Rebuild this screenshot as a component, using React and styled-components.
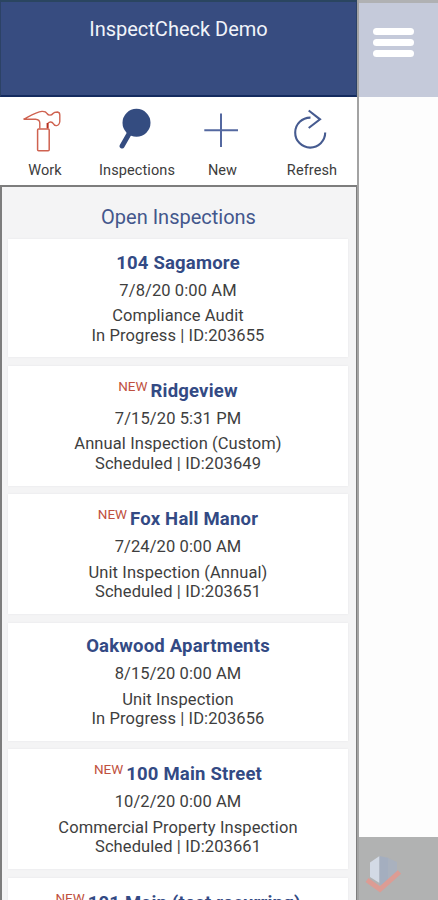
import React from "react";
import styled, { createGlobalStyle } from "styled-components";

const inspections = [
  {
    id: "203655",
    name: "104 Sagamore",
    date: "7/8/20 0:00 AM",
    type: "Compliance Audit",
    status: "In Progress",
  },
  {
    id: "203649",
    name: "Ridgeview",
    date: "7/15/20 5:31 PM",
    type: "Annual Inspection (Custom)",
    status: "Scheduled",
    isNew: true,
  },
  {
    id: "203651",
    name: "Fox Hall Manor",
    date: "7/24/20 0:00 AM",
    type: "Unit Inspection (Annual)",
    status: "Scheduled",
    isNew: true,
  },
  {
    id: "203656",
    name: "Oakwood Apartments",
    date: "8/15/20 0:00 AM",
    type: "Unit Inspection",
    status: "In Progress",
  },
  {
    id: "203661",
    name: "100 Main Street",
    date: "10/2/20 0:00 AM",
    type: "Commercial Property Inspection",
    status: "Scheduled",
    isNew: true,
  },
  {
    name: "101 Main (test recurring)",
    isNew: true,
  },
];

const HammerIcon = () => (
  <svg width="48" height="48" viewBox="0 0 48 48" fill="none">
    <path
      d="M2.5 14.2C8 11.5 15 7.2 21 6.4C24 6.3 25 6.6 26 8.5C27.5 10.8 30.5 10.6 32 8.5C33 7.2 34.5 7 36.5 7C38 7.2 38.8 8 38.8 10V16.5C38.5 19 37.5 20.3 35.5 20.6C33.8 20.8 33.2 20 32.5 18.8C31 16.4 28.5 16.4 26.8 18.4V23.5M2.5 14.2H14.5C17.8 14.4 18.8 15.5 18.8 18V23.5"
      stroke="#cf6250"
      strokeWidth="1.4"
    />
    <path d="M26.5 18V23.5" stroke="#b52d1c" strokeWidth="1.8" />
    <rect
      x="16.6"
      y="23.9"
      width="11.6"
      height="21.8"
      rx="1"
      stroke="#cf6250"
      strokeWidth="1.5"
    />
  </svg>
);

const SearchIcon = () => (
  <svg width="44" height="48" viewBox="0 0 44 48" fill="none">
    <circle cx="21.5" cy="17.8" r="14" fill="#344c80" />
    <path
      d="M14.5 28L7.1 41"
      stroke="#344c80"
      strokeWidth="5"
      strokeLinecap="round"
    />
  </svg>
);

const PlusIcon = () => (
  <svg width="44" height="48" viewBox="0 0 44 48" fill="none">
    <path d="M20 8.5V42M3.3 25.2H37" stroke="#5468a0" strokeWidth="2" />
  </svg>
);

const RefreshIcon = () => (
  <svg width="44" height="48" viewBox="0 0 44 48" fill="none">
    <path
      d="M20.5 12.6A15 15 0 1 0 35.2 27.6M18.7 5.5L30 14.3L18.7 23"
      stroke="#465b90"
      strokeWidth="2.1"
    />
  </svg>
);

const Logo = () => (
  <svg width="40" height="42" viewBox="0 0 40 42">
    <path d="M7 10.5L16.5 4V31L7 25Z" fill="#d3dae5" />
    <path d="M16.5 4L26 6V32L16.5 33Z" fill="#a4aebf" />
    <path d="M25 6L34 10V22L25 31Z" fill="#a9b1be" />
    <path
      d="M4 28L17 37.3L36.5 20"
      fill="none"
      stroke="#dc9c94"
      strokeWidth="5"
    />
  </svg>
);

const actions = [
  { label: "Work", icon: HammerIcon, width: 90 },
  { label: "Inspections", icon: SearchIcon, width: 94 },
  { label: "New", icon: PlusIcon, width: 77 },
  { label: "Refresh", icon: RefreshIcon, width: 102 },
];

const App = () => {
  return (
    <Screen>
      <GlobalStyle />
      <Drawer>
        <Header>InspectCheck Demo</Header>
        <Toolbar>
          {actions.map(({ label, icon: Icon, width }) => (
            <Action key={label} $width={width}>
              <Icon />
              <ActionLabel>{label}</ActionLabel>
            </Action>
          ))}
        </Toolbar>
        <ListPanel>
          <ListTitle>Open Inspections</ListTitle>
          <List>
            {inspections.map((item) => (
              <Card key={item.name} $isNew={item.isNew}>
                <CardTitle>
                  {item.isNew && <NewTag>NEW</NewTag>}
                  <Name>{item.name}</Name>
                </CardTitle>
                {item.date && <DateLine>{item.date}</DateLine>}
                {item.type && <InfoLine>{item.type}</InfoLine>}
                {item.id && (
                  <InfoLine>
                    {item.status} | ID:{item.id}
                  </InfoLine>
                )}
              </Card>
            ))}
          </List>
        </ListPanel>
      </Drawer>
      <Page>
        <PageHeader>
          <MenuButton aria-label="Menu">
            <MenuBar />
            <MenuBar />
            <MenuBar />
          </MenuButton>
        </PageHeader>
        <PageFooter>
          <Logo />
        </PageFooter>
      </Page>
    </Screen>
  );
};

export default App;

const GlobalStyle = createGlobalStyle`
  * {
    box-sizing: border-box;
  }
  body {
    margin: 0;
    overflow: hidden;
    font-family: Roboto, "Liberation Sans", sans-serif;
  }
`;

const Screen = styled.div`
  display: flex;
  width: 438px;
  height: 900px;
  overflow: hidden;
  background-color: #fdfdfd;
`;

const Drawer = styled.div`
  display: flex;
  flex-direction: column;
  width: 359px;
  height: 900px;
  flex-shrink: 0;
  border-right: 2px solid #a3a3a3;
  background-color: #ffffff;
`;

const Header = styled.div`
  height: 97px;
  flex-shrink: 0;
  padding-top: 15px;
  border: 1px solid #2c4266;
  border-top: 2px solid #2a4560;
  border-bottom: 2px solid #142b5f;
  background-color: #374c80;
  color: #f1f4fa;
  font-size: 20px;
  line-height: 24px;
  text-align: center;
`;

const Toolbar = styled.div`
  display: flex;
  height: 88px;
  flex-shrink: 0;
  padding-top: 8px;
`;

const Action = styled.div`
  display: flex;
  flex-direction: column;
  align-items: center;
  flex-shrink: 0;
  width: ${(props) => props.$width}px;
`;

const ActionLabel = styled.div`
  margin-top: 9px;
  color: #3c3c3c;
  font-size: 14.5px;
  line-height: 17px;
  letter-spacing: 0.1px;
`;

const ListPanel = styled.div`
  flex: 1;
  min-height: 0;
  overflow: hidden;
  padding: 0 8px 0 6px;
  border: 2px solid #7d7d7d;
  border-right-width: 1px;
  border-bottom: none;
  background-color: #f4f4f5;
`;

const ListTitle = styled.div`
  height: 52px;
  padding-top: 18px;
  padding-left: 1px;
  color: #43578c;
  font-size: 20px;
  line-height: 24px;
  text-align: center;
`;

const List = styled.div`
  display: flex;
  flex-direction: column;
  gap: 8.5px;
`;

const Card = styled.div`
  height: ${(props) => (props.$isNew ? "120px" : "118px")};
  flex-shrink: 0;
  padding-top: ${(props) => (props.$isNew ? "13px" : "11.5px")};
  background-color: #ffffff;
  box-shadow: 0 0 2px #e6e6e8;
  text-align: center;
`;

const CardTitle = styled.div`
  display: flex;
  justify-content: center;
  gap: 3px;
  height: 26px;
  white-space: nowrap;
`;

const NewTag = styled.span`
  color: #bf5140;
  font-size: 13.5px;
  line-height: 14px;
`;

const Name = styled.span`
  color: #334a84;
  font-size: 18.5px;
  font-weight: 700;
  line-height: 24px;
  letter-spacing: 0.2px;
`;

const DateLine = styled.div`
  height: 29.5px;
  color: #3e3e3e;
  font-size: 16.5px;
  line-height: 27px;
  letter-spacing: 0.1px;
`;

const InfoLine = styled.div`
  color: #3e3e3e;
  font-size: 16.5px;
  line-height: 19.5px;
  letter-spacing: 0.1px;
  white-space: nowrap;
`;

const Page = styled.div`
  display: flex;
  flex: 1;
  flex-direction: column;
  justify-content: space-between;
`;

const PageHeader = styled.div`
  height: 97px;
  padding: 25px 0 0 14px;
  border-top: 3px solid #b0b1b3;
  background-color: #c5cada;
`;

const MenuButton = styled.button`
  display: flex;
  flex-direction: column;
  gap: 4px;
  padding: 0;
  border: none;
  background: none;
`;

const MenuBar = styled.span`
  width: 41px;
  height: 7px;
  border-radius: 3.5px;
  background-color: #ffffff;
`;

const PageFooter = styled.div`
  height: 63px;
  padding: 15px 0 0 4px;
  background-color: #b1b2b2;
`;
